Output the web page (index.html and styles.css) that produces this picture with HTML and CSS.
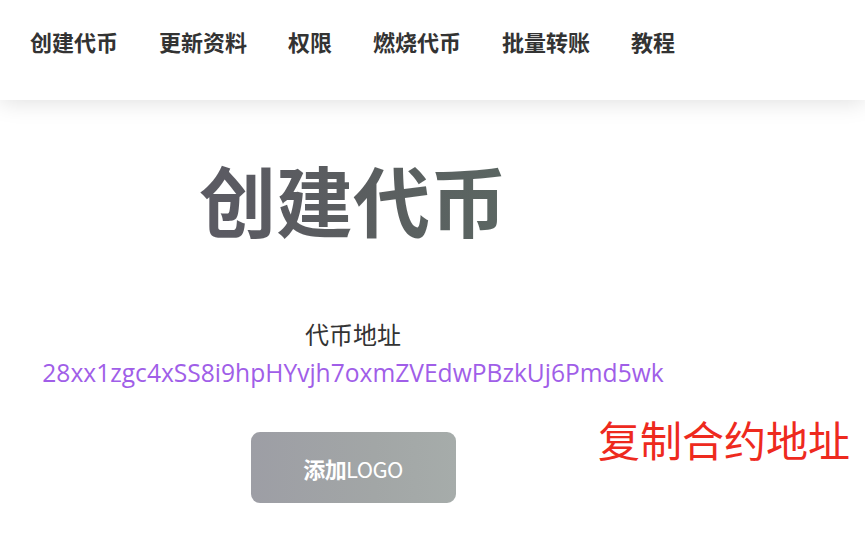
FILE: index.html
```html
<!DOCTYPE html>
<html lang="zh">
<head>
<meta charset="utf-8">
<title>创建代币</title>
<link rel="stylesheet" href="styles.css">
</head>
<body>
<header class="topbar">
  <nav class="nav">
    <a class="nav-item" href="#">创建代币</a>
    <a class="nav-item" href="#">更新资料</a>
    <a class="nav-item" href="#">权限</a>
    <a class="nav-item" href="#">燃烧代币</a>
    <a class="nav-item" href="#">批量转账</a>
    <a class="nav-item" href="#">教程</a>
  </nav>
</header>
<main class="page">
  <section class="panel">
    <h1 class="title">创建代币</h1>
    <div class="label">代币地址</div>
    <div class="address">28xx1zgc4xSS8i9hpHYvjh7oxmZVEdwPBzkUj6Pmd5wk</div>
    <button class="logo-btn" type="button"><b>添加</b>LOGO</button>
  </section>
  <div class="note">复制合约地址</div>
</main>
</body>
</html>
```

FILE: styles.css
```css
* { box-sizing: border-box; }
html, body { margin: 0; padding: 0; background: #ffffff; }
body {
  font-family: "Noto Sans CJK SC", "Open Sans", sans-serif;
  width: 865px;
  height: 537px;
  overflow: hidden;
}
.topbar {
  height: 100px;
  background: #ffffff;
  display: flex;
  align-items: center;
  position: relative;
  z-index: 2;
  box-shadow: 0 2px 22px rgba(0, 0, 0, 0.13);
}
.nav {
  display: flex;
  gap: 41px;
  padding-left: 30px;
  margin-top: -18px;
}
.nav-item {
  font-size: 22px;
  font-weight: 700;
  color: #333333;
  text-decoration: none;
  line-height: 30px;
  letter-spacing: 0;
}
.page {
  position: relative;
  height: 437px;
  background: #ffffff;
}
.panel {
  width: 706px;
  display: flex;
  flex-direction: column;
  align-items: center;
  padding-top: 54px;
}
.title {
  margin: 0;
  font-size: 77px;
  line-height: 90px;
  font-weight: 700;
  background: linear-gradient(90deg, #5b5a63 0%, #5a5d5f 50%, #5b6662 100%);
  -webkit-background-clip: text;
  background-clip: text;
  color: transparent;
}
.label {
  margin-top: 75px;
  font-size: 24px;
  line-height: 30px;
  color: #333333;
}
.address {
  margin-top: 9px;
  font-family: "Open Sans", "Noto Sans", sans-serif;
  font-size: 24.6px;
  line-height: 30px;
  color: #a05ee8;
  font-weight: 500;
}
.logo-btn {
  margin-top: 44px;
  width: 205px;
  height: 71px;
  border: none;
  border-radius: 9px;
  background: linear-gradient(90deg, #9d9ea5 0%, #a2a6a6 60%, #a6acaa 100%);
  color: #ffffff;
  font-family: "Noto Sans CJK SC", sans-serif;
  font-size: 22px;
  font-weight: 400;
  letter-spacing: -0.6px;
  padding-top: 2px;
}
.logo-btn b { font-weight: 700; }
.note {
  position: absolute;
  left: 598px;
  top: 314px;
  font-size: 42px;
  line-height: 50px;
  color: #ee2a1e;
}
```
